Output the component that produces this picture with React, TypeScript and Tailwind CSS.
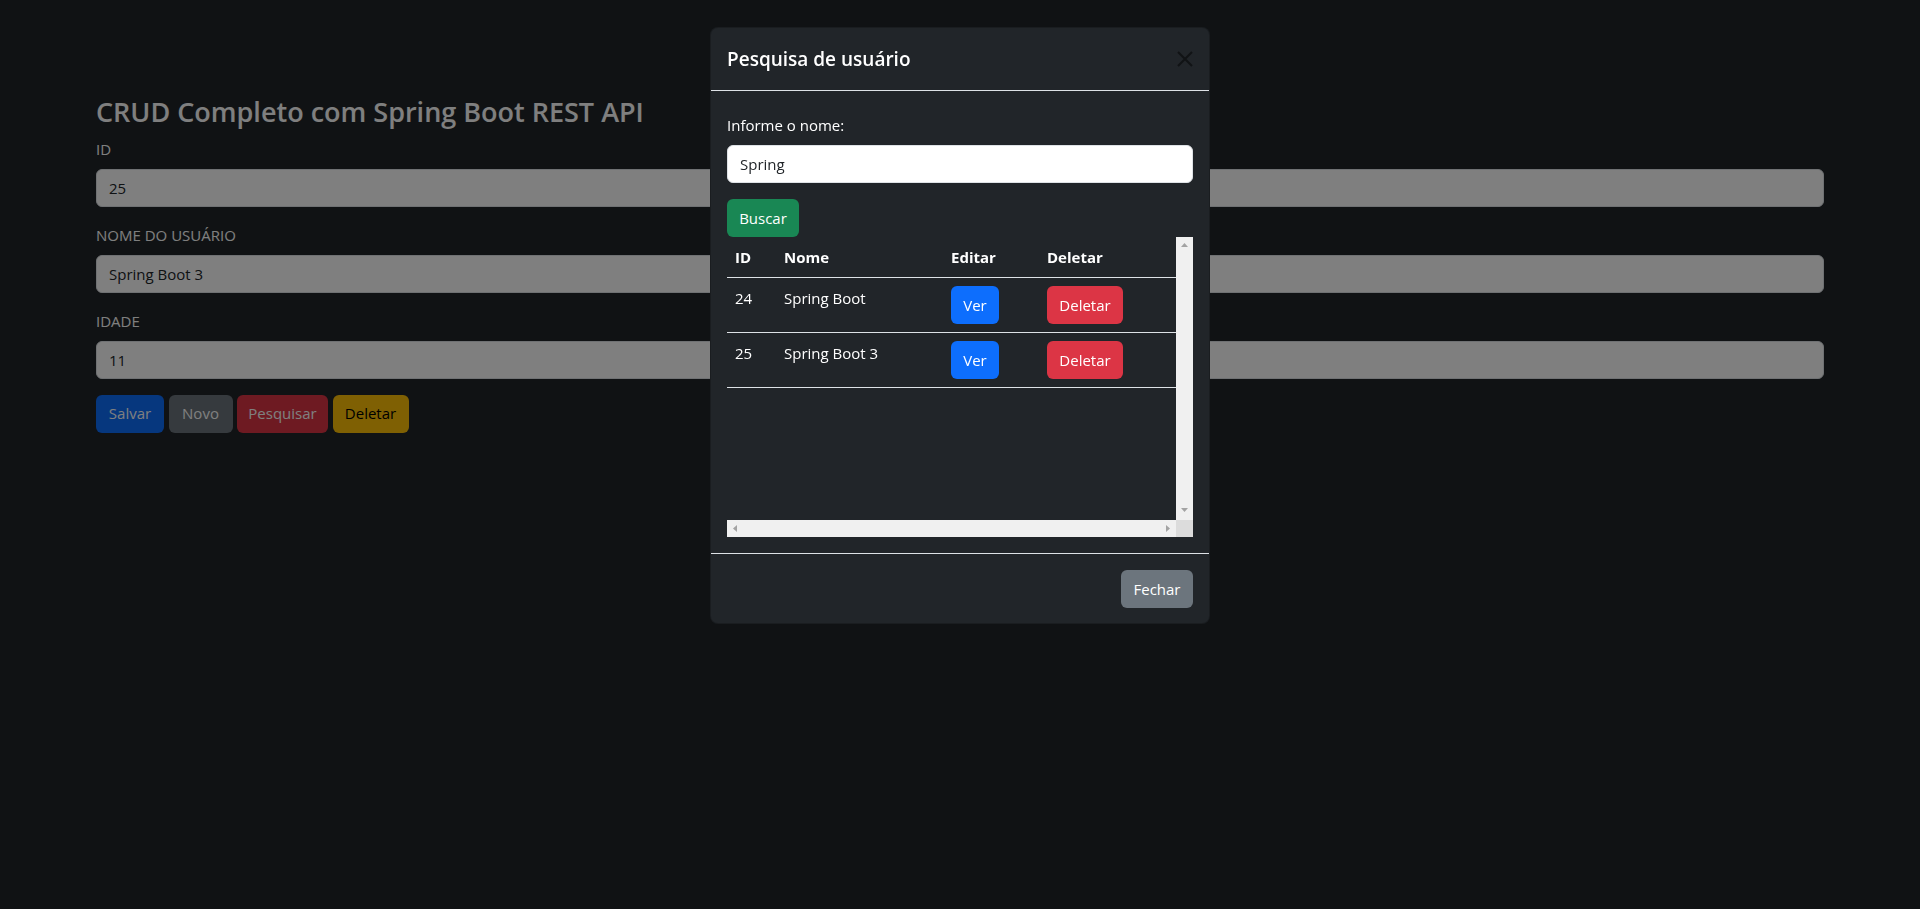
import React from 'react';

const fields = [
  { label: 'ID', value: '25' },
  { label: 'NOME DO USUÁRIO', value: 'Spring Boot 3' },
  { label: 'IDADE', value: '11' },
];

const users = [
  { id: 24, nome: 'Spring Boot' },
  { id: 25, nome: 'Spring Boot 3' },
];

const Arrow = ({ dir }: { dir: 'up' | 'down' | 'left' | 'right' }) => {
  const pts = {
    up: '0,4 3.5,0 7,4',
    down: '0,0 3.5,4 7,0',
    left: '4,0 0,3.5 4,7',
    right: '0,0 4,3.5 0,7',
  }[dir];
  const vertical = dir === 'up' || dir === 'down';
  return (
    <svg width={vertical ? 7 : 4} height={vertical ? 4 : 7} viewBox={vertical ? '0 0 7 4' : '0 0 4 7'}>
      <polygon points={pts} fill="#a3a3a3" />
    </svg>
  );
};

export default function App() {
  return (
    <div className="relative min-h-screen bg-[#212529] text-white font-['Open_Sans',sans-serif] text-[15px]">
      {/* pagina de cadastro */}
      <div className="px-[96px] pt-[95px]">
        <h3 className="text-[27px] font-semibold leading-[33.6px] mb-2">CRUD Completo com Spring Boot REST API</h3>
        {fields.map((f) => (
          <div key={f.label} className="mb-4">
            <label className="block leading-6 mb-2">{f.label}</label>
            <input
              readOnly
              value={f.value}
              className="block w-full h-[38px] px-3 rounded-md bg-white border border-[#dee2e6] text-[#212529] outline-none"
            />
          </div>
        ))}
        <div className="flex gap-[4.5px]">
          <button className="w-[68px] h-[38px] rounded-md bg-[#0d6efd] text-white">Salvar</button>
          <button className="w-[64px] h-[38px] rounded-md bg-[#6c757d] text-white">Novo</button>
          <button className="w-[91px] h-[38px] rounded-md bg-[#dc3545] text-white">Pesquisar</button>
          <button className="w-[76px] h-[38px] rounded-md bg-[#ffc107] text-black">Deletar</button>
        </div>
      </div>

      {/* modal */}
      <div className="fixed inset-0 bg-black/50">
        <div className="mx-auto mt-[27px] w-[500px] rounded-lg border border-black/20 bg-[#212529] text-white">
          <div className="flex items-center justify-between px-4 py-4 border-b border-[#dee2e6]">
            <h5 className="text-[19px] font-semibold leading-[30px]">Pesquisa de usuário</h5>
            <svg width="16" height="16" viewBox="0 0 16 16">
              <path d="M1 1L15 15M15 1L1 15" stroke="#111315" strokeWidth="2" />
            </svg>
          </div>

          <div className="px-4 pt-[22px] pb-4">
            <label className="block leading-6 mb-2">Informe o nome:</label>
            <input
              readOnly
              value="Spring"
              className="block w-full h-[38px] px-3 rounded-md bg-white border border-[#dee2e6] text-[#212529] outline-none mb-4"
            />
            <button className="w-[72px] h-[38px] rounded-md bg-[#198754] text-white">Buscar</button>

            <div className="grid h-[300px] grid-cols-[1fr_17px] grid-rows-[1fr_17px]">
              <div className="overflow-hidden">
                <table className="w-full table-fixed border-collapse">
                  <thead>
                    <tr className="border-b border-[#dee2e6]">
                      <th className="w-[49px] p-2 text-left font-bold leading-6">ID</th>
                      <th className="w-[167px] p-2 text-left font-bold leading-6">Nome</th>
                      <th className="w-[96px] p-2 text-left font-bold leading-6">Editar</th>
                      <th className="p-2 text-left font-bold leading-6">Deletar</th>
                    </tr>
                  </thead>
                  <tbody>
                    {users.map((u) => (
                      <tr key={u.id} className="border-b border-[#dee2e6] align-top">
                        <td className="p-2 leading-6">{u.id}</td>
                        <td className="p-2 leading-6">{u.nome}</td>
                        <td className="p-2">
                          <button className="w-[48px] h-[38px] rounded-md bg-[#0d6efd] text-white">Ver</button>
                        </td>
                        <td className="p-2">
                          <button className="w-[76px] h-[38px] rounded-md bg-[#dc3545] text-white">Deletar</button>
                        </td>
                      </tr>
                    ))}
                  </tbody>
                </table>
              </div>
              <div className="flex flex-col items-center justify-between bg-[#f0f0f0] pt-[6px] pb-[8px]">
                <Arrow dir="up" />
                <Arrow dir="down" />
              </div>
              <div className="flex items-center justify-between bg-[#f0f0f0] pl-[6px] pr-[6px]">
                <Arrow dir="left" />
                <Arrow dir="right" />
              </div>
              <div className="bg-[#dcdcdc]" />
            </div>
          </div>

          <div className="flex justify-end border-t border-[#dee2e6] px-4 pt-4 pb-[15px]">
            <button className="w-[72px] h-[38px] rounded-md bg-[#6c757d] text-white">Fechar</button>
          </div>
        </div>
      </div>
    </div>
  );
}
